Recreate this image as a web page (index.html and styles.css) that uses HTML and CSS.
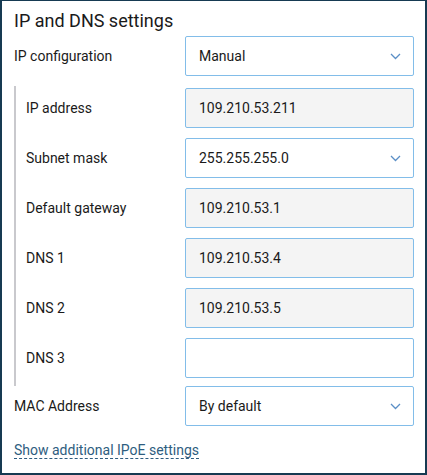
FILE: index.html
```html
<!DOCTYPE html>
<html lang="en">
<head>
<meta charset="utf-8">
<title>IP and DNS settings</title>
<link rel="stylesheet" href="styles.css">
</head>
<body>
<div class="panel">
  <h2 class="title">IP and DNS settings</h2>
  <div class="row row-top">
    <label class="label">IP configuration</label>
    <div class="field select"><span class="value">Manual</span>
      <svg class="chev" width="11" height="7" viewBox="0 0 11 7"><path d="M1 1l4.5 4.5L10 1" fill="none" stroke="#5b8fc6" stroke-width="1.3"/></svg>
    </div>
  </div>
  <div class="section">
    <div class="row">
      <label class="label">IP address</label>
      <div class="field readonly"><span class="value">109.210.53.211</span></div>
    </div>
    <div class="row">
      <label class="label">Subnet mask</label>
      <div class="field select"><span class="value">255.255.255.0</span>
        <svg class="chev" width="11" height="7" viewBox="0 0 11 7"><path d="M1 1l4.5 4.5L10 1" fill="none" stroke="#5b8fc6" stroke-width="1.3"/></svg>
      </div>
    </div>
    <div class="row">
      <label class="label">Default gateway</label>
      <div class="field readonly"><span class="value">109.210.53.1</span></div>
    </div>
    <div class="row">
      <label class="label">DNS 1</label>
      <div class="field readonly"><span class="value">109.210.53.4</span></div>
    </div>
    <div class="row">
      <label class="label">DNS 2</label>
      <div class="field readonly"><span class="value">109.210.53.5</span></div>
    </div>
    <div class="row">
      <label class="label">DNS 3</label>
      <div class="field"><span class="value"></span></div>
    </div>
  </div>
  <div class="row">
    <label class="label">MAC Address</label>
    <div class="field select"><span class="value">By default</span>
      <svg class="chev" width="11" height="7" viewBox="0 0 11 7"><path d="M1 1l4.5 4.5L10 1" fill="none" stroke="#5b8fc6" stroke-width="1.3"/></svg>
    </div>
  </div>
  <div class="more"><a class="link">Show additional IPoE settings</a></div>
</div>
</body>
</html>
```
FILE: styles.css
```css
html, body {
  margin: 0;
  padding: 0;
}
body {
  background: #163a52;
  width: 427px;
  height: 475px;
  overflow: hidden;
  font-family: Roboto, "Liberation Sans", sans-serif;
  color: #1a1a1a;
}
.panel {
  box-sizing: border-box;
  margin: 1px 2px 2px 2px;
  height: 472px;
  background: #ffffff;
  padding: 9px 11px 0 12px;
}
.title {
  margin: 0 0 4px 0;
  font-size: 18px;
  line-height: 22px;
  font-weight: 400;
}
.row {
  display: grid;
  grid-template-columns: 1fr 229px;
  align-items: center;
  height: 40px;
}
.row-top {
  margin-bottom: 10px;
}
.label {
  font-size: 14px;
  line-height: 20px;
  margin-top: -1px;
}
.section {
  border-left: 2px solid #c9c9cd;
  padding: 2px 0 8px 10px;
  display: flex;
  flex-direction: column;
  gap: 10px;
}
.field {
  box-sizing: border-box;
  height: 40px;
  border: 1px solid #82bde9;
  border-radius: 2px;
  background: #ffffff;
  display: flex;
  align-items: center;
  padding: 0 12px 0 13px;
  font-size: 14px;
}
.field.readonly {
  background: #f4f4f4;
}
.value {
  flex: 1;
}
.chev {
  display: block;
}
.more {
  margin: 14px 0 0 0;
  font-size: 14px;
  line-height: 20px;
}
.link {
  color: #2e5d80;
  border-bottom: 1px dashed #2e5d80;
  cursor: pointer;
}
```
